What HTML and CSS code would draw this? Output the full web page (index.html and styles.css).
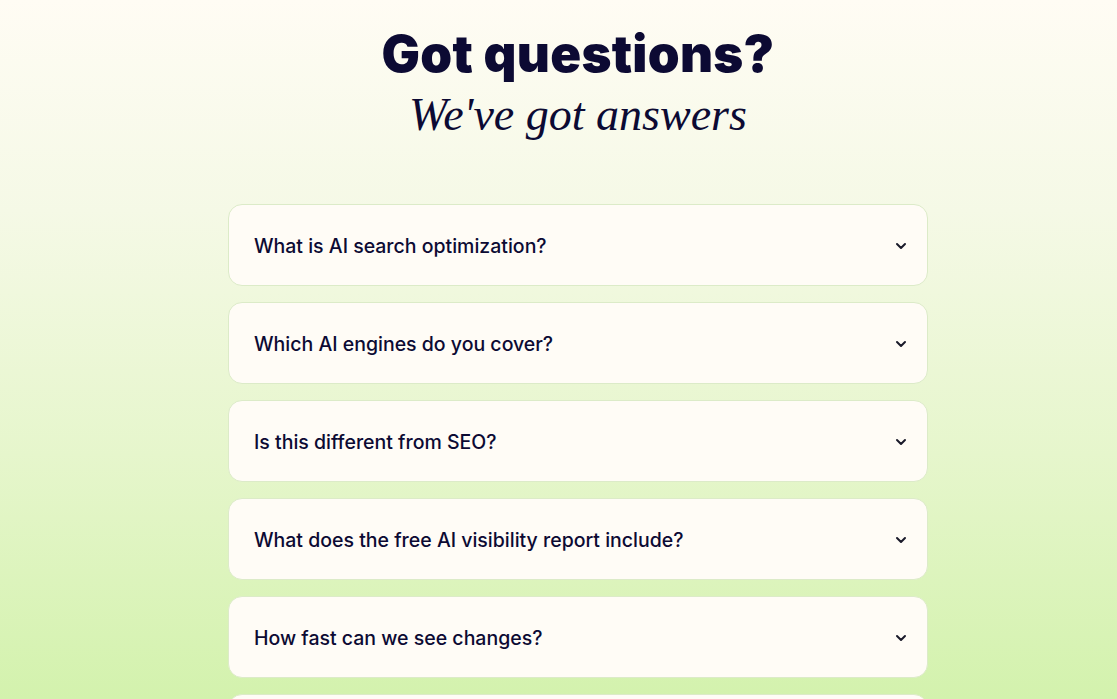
FILE: index.html
```html
<!DOCTYPE html>
<html lang="en">
<head>
<meta charset="utf-8">
<link rel="stylesheet" href="styles.css">
</head>
<body>
<section class="faq">
  <header class="faq-head">
    <h2 class="title">Got questions?</h2>
    <p class="subtitle">We've got answers</p>
  </header>
  <div class="list">
    <div class="item"><span>What is AI search optimization?</span><svg class="chev" viewBox="0 0 12 12"><path d="M2 4 L6 8 L10 4"/></svg></div>
    <div class="item"><span>Which AI engines do you cover?</span><svg class="chev" viewBox="0 0 12 12"><path d="M2 4 L6 8 L10 4"/></svg></div>
    <div class="item"><span>Is this different from SEO?</span><svg class="chev" viewBox="0 0 12 12"><path d="M2 4 L6 8 L10 4"/></svg></div>
    <div class="item"><span>What does the free AI visibility report include?</span><svg class="chev" viewBox="0 0 12 12"><path d="M2 4 L6 8 L10 4"/></svg></div>
    <div class="item"><span>How fast can we see changes?</span><svg class="chev" viewBox="0 0 12 12"><path d="M2 4 L6 8 L10 4"/></svg></div>
    <div class="item"><span>Do you work with agencies?</span><svg class="chev" viewBox="0 0 12 12"><path d="M2 4 L6 8 L10 4"/></svg></div>
  </div>
</section>
</body>
</html>
```
FILE: styles.css
```css
html, body {
  margin: 0;
  padding: 0;
}
body {
  height: 100vh;
  background: linear-gradient(180deg, #fffcf4 0%, #f5f9e6 30%, #e6f6cc 65%, #d3f2ad 100%);
  color: #0c0a33;
  font-family: "Inter", "DejaVu Sans", sans-serif;
  overflow: hidden;
}
.faq {
  display: flex;
  flex-direction: column;
  align-items: center;
  padding-top: 24px;
  padding-left: 39px;
}
.faq-head {
  display: flex;
  flex-direction: column;
  align-items: center;
}
.title {
  margin: 0;
  font-family: "Inter", sans-serif;
  font-weight: 900;
  font-size: 51px;
  line-height: 60px;
  letter-spacing: 0.3px;
  color: #0c0a33;
}
.subtitle {
  margin: 3px 0 0;
  font-family: "Liberation Serif", serif;
  font-style: italic;
  font-size: 46px;
  line-height: 56px;
  letter-spacing: 0;
  color: #0c0a33;
}
.list {
  margin-top: 61px;
  width: 700px;
  display: flex;
  flex-direction: column;
  gap: 16px;
}
.item {
  box-sizing: border-box;
  flex: none;
  height: 82px;
  display: flex;
  align-items: center;
  justify-content: space-between;
  padding: 1px 20px 0 25px;
  background: #fffcf6;
  border: 1px solid #dcebc8;
  border-radius: 14px;
  font-size: 19.5px;
  font-weight: 500;
  color: #0c0a33;
}
.chev {
  width: 12px;
  height: 12px;
  fill: none;
  stroke: #1a1a2a;
  stroke-width: 2;
  stroke-linecap: round;
  stroke-linejoin: round;
}
```
